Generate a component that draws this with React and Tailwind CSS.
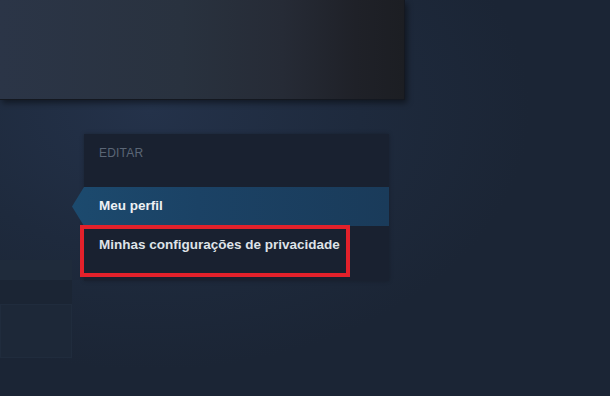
export default function App() {
  return (
    <div className="relative w-[610px] h-[396px] overflow-hidden bg-[radial-gradient(ellipse_380px_260px_at_150px_110px,#24324a_0%,#1e2a3d_55%,#1b2535_100%)] font-['Liberation_Sans',Arial,sans-serif]">
      <div className="w-[405px] h-[100px] bg-[linear-gradient(90deg,#2b3547_0%,#29323f_45%,#262b36_70%,#1f2128_88%,#1c1e23_100%)] border-b border-r border-[#141820] shadow-[2px_3px_6px_rgba(0,0,0,0.45)]" />
      <div className="flex mt-[34px]">
        <div className="w-[84px] shrink-0 flex flex-col pt-[126px]">
          <div className="w-[72px] h-[20px] bg-[#1f2b3b]" />
          <div className="w-[72px] h-[24px] bg-[#1b2534]" />
          <div className="w-[72px] h-[54px] bg-[#1d2838] border border-[#202c3d]" />
        </div>
        <div className="relative w-[305px] h-[147px] bg-[#192130] shadow-[0_0_4px_rgba(0,0,0,0.25)] flex flex-col">
          <div className="pl-[15px] pt-[10px] h-[53px] text-[12px] text-[#5b6676] tracking-[0.2px]">EDITAR</div>
          <div className="-ml-[12px] h-[39px] flex items-center pl-[27px] text-[13.5px] font-bold text-[#eef1f4] bg-[linear-gradient(90deg,#1c4a6e_0%,#1b4265_40%,#1a3b5a_100%)] [clip-path:polygon(12px_0,100%_0,100%_100%,12px_100%,0_50%)]">
            Meu perfil
          </div>
          <div className="h-[39px] flex items-center pl-[15px] text-[13.5px] font-bold text-[#dfe3e8]">
            Minhas configurações de privacidade
          </div>
          <div className="absolute left-[-4px] top-[91px] w-[270px] h-[52px] border-[4px] border-[#e3212b]" />
        </div>
      </div>
    </div>
  );
}
